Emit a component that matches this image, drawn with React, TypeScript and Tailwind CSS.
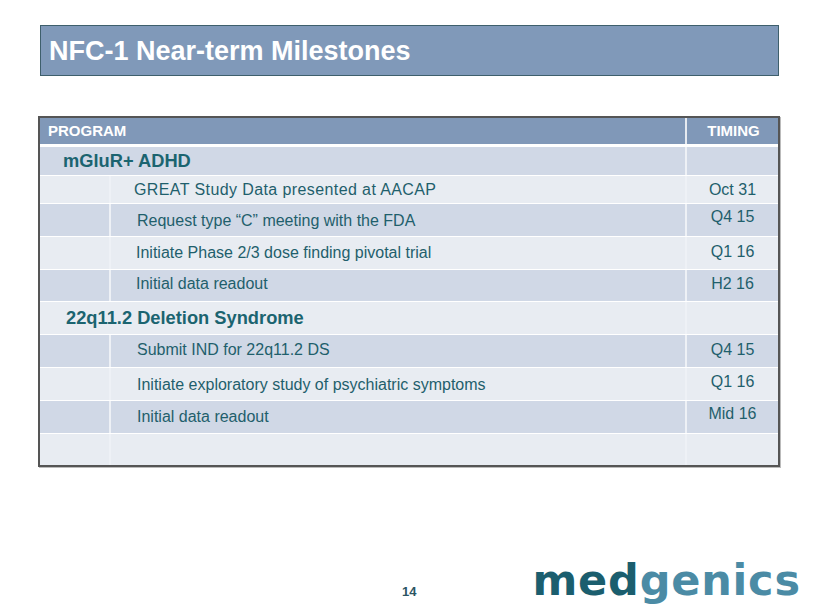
export default function App() {
  const rows: { kind: "group" | "item" | "empty"; text?: string; timing?: string; h: string; dark: boolean; pl?: string; tpb?: string; extra?: string }[] = [
    { kind: "group", text: "mGluR+ ADHD", h: "h-[29px]", dark: true, pl: "pl-[23px]" },
    { kind: "item", text: "GREAT Study Data presented at AACAP", timing: "Oct 31", h: "h-[28px]", dark: false, pl: "pl-[23px]", extra: "tracking-[0.4px]" },
    { kind: "item", text: "Request type \u201cC\u201d meeting with the FDA", timing: "Q4 15", h: "h-[33px]", dark: true, pl: "pl-[26px]", tpb: "pb-[6px]", extra: "pt-[2px]" },
    { kind: "item", text: "Initiate Phase 2/3 dose finding pivotal trial", timing: "Q1 16", h: "h-[33px]", dark: false, pl: "pl-[25px]", tpb: "pb-[3px]" },
    { kind: "item", text: "Initial data readout", timing: "H2 16", h: "h-[32px]", dark: true, pl: "pl-[25px]", tpb: "pb-[3px]", extra: "pb-[3px]" },
    { kind: "group", text: "22q11.2 Deletion Syndrome", h: "h-[33px]", dark: false, pl: "pl-[26px]" },
    { kind: "item", text: "Submit IND for 22q11.2 DS", timing: "Q4 15", h: "h-[33px]", dark: true, pl: "pl-[26px]", tpb: "pb-[2px]", extra: "pb-[2px]" },
    { kind: "item", text: "Initiate exploratory study of psychiatric symptoms", timing: "Q1 16", h: "h-[33px]", dark: false, pl: "pl-[26px]", tpb: "pb-[4px]", extra: "pt-[2px]" },
    { kind: "item", text: "Initial data readout", timing: "Mid 16", h: "h-[33px]", dark: true, pl: "pl-[26px]", tpb: "pb-[7px]" },
    { kind: "empty", h: "h-[31px]", dark: false },
  ];

  return (
    <div className="w-[820px] h-[615px] bg-white overflow-hidden font-['Liberation_Sans',Arial,sans-serif]">
      {/* Title bar */}
      <div className="pt-[25px] pl-[40px]">
        <div className="w-[739px] h-[51px] bg-[#8099b9] border border-[#3e5f6c] flex items-center pl-[8px] pt-[2px]">
          <h1 className="text-[27px] font-bold text-white leading-none">NFC-1 Near-term Milestones</h1>
        </div>
      </div>

      {/* Table */}
      <div className="mt-[40px] ml-[38px] w-[742px] border-2 border-[#555] shadow-[1px_1px_0_#bbb]">
        <div className="flex h-[29px] bg-[#8098b8] border-b-[3px] border-white text-white font-bold text-[15px]">
          <div className="flex-1 flex items-center pl-[8px]">PROGRAM</div>
          <div className="w-[93px] border-l-2 border-[#e6eaf0] flex items-center justify-center pl-[2px]">TIMING</div>
        </div>
        {rows.map((r, i) => (
          <div
            key={i}
            className={`flex ${r.h} ${r.dark ? "bg-[#d0d8e6]" : "bg-[#e8ecf2]"} ${i < rows.length - 1 ? "border-b border-white" : ""} text-[#1f5f6c]`}
          >
            {r.kind === "group" ? (
              <div className={`flex-1 flex items-center ${r.pl} text-[18.3px] font-bold text-[#1b6470]`}>{r.text}</div>
            ) : (
              <>
                <div className="w-[71px] border-r-2 border-[#eef1f6]" />
                <div className={`flex-1 flex items-center ${r.pl} ${r.extra ?? ""} text-[16px]`}>{r.text}</div>
              </>
            )}
            <div className={`w-[93px] border-l-2 border-[#eef1f6] flex items-center justify-center ${r.tpb ?? ""} text-[16px]`}>{r.timing}</div>
          </div>
        ))}
      </div>

      {/* Footer */}
      <div className="flex items-start mt-[92px]">
        <div className="ml-[402px] mt-[25px] text-[13px] leading-[15px] font-bold text-[#2b5563]">14</div>
        <div className="ml-[116px] font-['DejaVu_Sans',sans-serif] font-bold text-[43px] leading-none tracking-[0.8px]">
          <span className="text-[#1b5e6e]">med</span>
          <span className="text-[#4b8ba5]">genics</span>
        </div>
      </div>
    </div>
  );
}
